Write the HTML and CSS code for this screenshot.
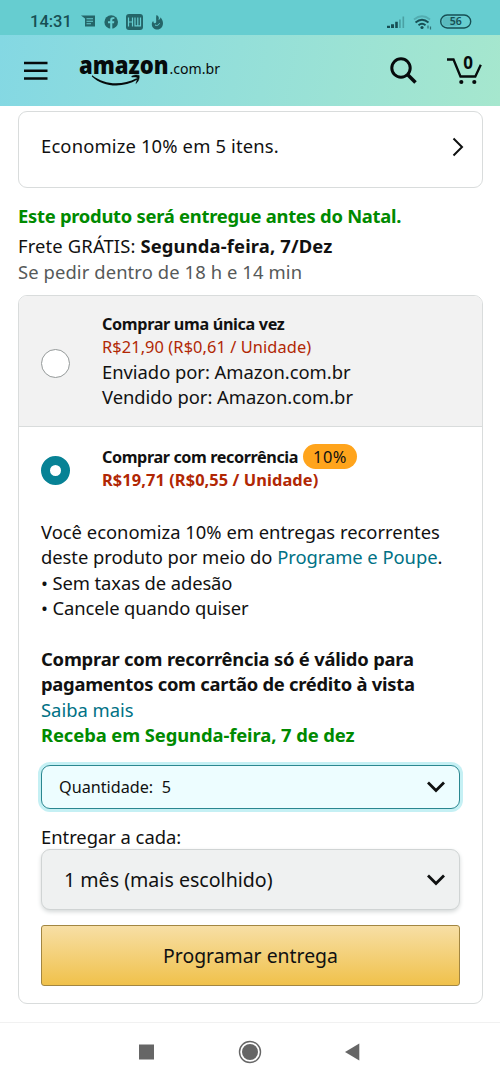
FILE: index.html
```html
<!DOCTYPE html>
<html lang="pt-BR">
<head>
<meta charset="utf-8">
<title>Amazon.com.br</title>
<link rel="stylesheet" href="styles.css">
</head>
<body>
<div class="status">
  <span class="clock">14:31</span>
  <svg class="status-left" width="84" height="18" viewBox="0 0 84 18">
    <path d="M0 2.500h14v11H4v-8z" fill="#246568"/>
    <path d="M5.500 5.700h6.500M5.500 8.200h6.500M5.500 10.700h4.500" stroke="#66cdd0" stroke-width="1.100"/>
    <circle cx="30.200" cy="9" r="6.800" fill="#246568"/>
    <path d="M29.200 16V10.300h-2.200V8.300h2.200V6.900q0-2.700 2.700-2.700h1.500v1.900h-1.100q-1 0-1 1v1.200h2l-.3 2h-1.700V16z" fill="#66cdd0"/>
    <rect x="45" y="1" width="17" height="16" rx="3" fill="#246568"/>
    <path d="M47.500 4.500v9M51.500 4.500v9M47.500 9h4M54 4.500v8.400h5.500v-8.400M56.800 4.500v8.400" stroke="#66cdd0" stroke-width="1.200" fill="none"/>
    <path d="M75.500 2c3 1.500 2.500 3.500 2 5 1.500-.5 2-2 1.900-2.800 1.800 1.800 2.600 4 2.600 6 0 3.800-2.600 6.300-5.600 6.300-3.200 0-5.600-2.200-5.600-5.300 0-1.500.7-2.700 1.500-3.300 0 1.500.8 2.300 1.600 2.300 2.600 0 .4-4 1.600-8.200z" fill="#246568"/>
    <path d="M74 12c1.800 1 4 .2 4.500-1.800" stroke="#66cdd0" fill="none"/>
  </svg>
  <svg class="status-right" width="88" height="20" viewBox="0 0 88 20">
    <g fill="#174f54"><path d="M1 16v-2.200h3V16zM5 16v-3.800h3V16zM9.200 16V9.800h2.600V16z"/><path d="M13 16V7.500h1.800V16zM16.500 16V4.500h1.600V16z" opacity=".35"/></g>
    <g fill="none" stroke="#174f54" stroke-width="1.800"><path d="M28 7.500q8-6.500 16 0" opacity=".25"/><path d="M29.500 10.500q6.500-5.500 13 0M32.500 13.300q3.500-3 7 0"/></g>
    <circle cx="36" cy="15.500" r="1.600" fill="#174f54"/><path d="M42 13.500v3M44.500 14.500v3" stroke="#174f54" stroke-width="1.200" opacity=".7"/>
    <rect x="54.700" y="3" width="30" height="13" rx="6.500" fill="none" stroke="#174f54" stroke-width="1.400"/>
    <rect x="56.500" y="4.800" width="16" height="9.400" rx="4" fill="#174f54" opacity=".15"/>
    <text x="69.700" y="13.300" text-anchor="middle" class="battery">56</text>
  </svg>
</div>
<header class="header">
  <svg class="menu" width="24" height="20" viewBox="0 0 24 20"><path d="M0 2h23.500M0 9.800h23.500M0 17.500h23.500" stroke="#060b0c" stroke-width="2.600"/></svg>
  <svg class="logo" width="144" height="34" viewBox="0 0 144 34">
    <text x="0" y="20.500" textLength="89.500" lengthAdjust="spacingAndGlyphs" class="logo-name">amazon</text>
    <text x="90.500" y="20.500" textLength="50.500" lengthAdjust="spacingAndGlyphs" class="logo-domain">.com.br</text>
    <path d="M13.200 22.300C26 32.300 43 32.600 57.600 25.300l.8 1.300C43 36 24 33.800 12.800 23.500z" fill="#060b0c"/>
    <path d="M52.800 23.200c2.800-1.700 6.200-1.500 7.400-.7.500 2.800-.9 6.300-3.300 8 1-2.700 1.700-4.700 1.200-6-1.200-.8-3.200-.5-5.300-.4z" fill="#060b0c" stroke="#060b0c" stroke-width=".5"/>
  </svg>
  <svg class="search" width="30" height="30" viewBox="0 0 30 30"><circle cx="12" cy="12" r="9.200" fill="none" stroke="#060b0c" stroke-width="3"/><path d="M18.500 18.500l8 8" stroke="#060b0c" stroke-width="3.600"/></svg>
  <svg class="cart" width="38" height="32" viewBox="0 0 38 32">
    <path d="M1 5.500h6.500l7 17h14.800l5.500-11.800" fill="none" stroke="#060b0c" stroke-width="2.300"/>
    <circle cx="15.300" cy="28" r="2.100" fill="#060b0c"/><circle cx="28.300" cy="28" r="2.100" fill="#060b0c"/>
    <text x="22" y="15" text-anchor="middle" class="cart-count">0</text>
  </svg>
</header>
<main>
  <section class="promo">
    <span class="promo-text">Economize 10% em 5 itens.</span>
    <svg width="12" height="20" viewBox="0 0 12 20"><path d="M1.500 1.500l8.500 8.500-8.500 8.500" fill="none" stroke="#0f1111" stroke-width="2"/></svg>
  </section>
  <section class="delivery">
    <p class="natal">Este produto será entregue antes do Natal.</p>
    <p class="shipping">Frete GRÁTIS: <b>Segunda-feira, 7/Dez</b></p>
    <p class="deadline">Se pedir dentro de 18 h e 14 min</p>
  </section>
  <section class="offers">
    <div class="once">
      <span class="radio"></span>
      <div>
        <p class="title">Comprar uma única vez</p>
        <p class="price">R$21,90 (R$0,61 / Unidade)</p>
        <p class="seller">Enviado por: Amazon.com.br</p>
        <p class="seller">Vendido por: Amazon.com.br</p>
      </div>
    </div>
    <div class="subscribe">
      <div class="choice">
        <span class="radio radio-on"></span>
        <div>
          <p class="title title-sub">Comprar com recorrência<span class="badge">10%</span></p>
          <p class="price price-sub">R$19,71 (R$0,55 / Unidade)</p>
        </div>
      </div>
      <div class="details">
        <p>Você economiza 10% em entregas recorrentes</p>
        <p class="program">deste produto por meio do <a>Programe e Poupe</a>.</p>
        <p class="bullet">• Sem taxas de adesão</p>
        <p class="bullet">• Cancele quando quiser</p>
        <p class="notice">Comprar com recorrência só é válido para</p>
        <p class="notice notice-end">pagamentos com cartão de crédito à vista</p>
        <p><a>Saiba mais</a></p>
        <p class="receive">Receba em Segunda-feira, 7 de dez</p>
      </div>
      <div class="select quantity">
        <span>Quantidade:&nbsp; 5</span>
        <svg width="20" height="14" viewBox="0 0 20 14"><path d="M2 2.500l8 8 8-8" fill="none" stroke="#0f1111" stroke-width="2.800"/></svg>
      </div>
      <p class="label">Entregar a cada:</p>
      <div class="select frequency">
        <span>1 mês (mais escolhido)</span>
        <svg width="20" height="14" viewBox="0 0 20 14"><path d="M2 2.500l8 8 8-8" fill="none" stroke="#0f1111" stroke-width="2.800"/></svg>
      </div>
      <div class="submit">Programar entrega</div>
    </div>
  </section>
</main>
<nav class="nav">
  <svg width="224" height="26" viewBox="0 0 224 26">
    <rect x="1" y="5.500" width="15" height="15" fill="#666"/>
    <circle cx="112" cy="13" r="10.500" fill="none" stroke="#666" stroke-width="1.400"/><circle cx="112" cy="13" r="8" fill="#666"/>
    <path d="M221.300 4.500v17L207 13z" fill="#666"/>
  </svg>
</nav>
</body>
</html>
```
FILE: styles.css
```css
* { box-sizing: border-box; }
body {
  margin: 0;
  width: 500px;
  height: 1082px;
  overflow: hidden;
  background: #fff;
  color: #111;
  font: 18.4px/25.4px "Noto Sans", sans-serif;
}
p { margin: 0; white-space: nowrap; }
svg { display: block; flex: none; overflow: visible; }
a { color: #007185; }

.status {
  display: flex;
  align-items: center;
  height: 35px;
  padding: 8px 26px 0 30px;
  background: #66cdd0;
}
.clock { width: 50px; font: 500 16.5px/18px Roboto, sans-serif; color: #174f54; }
.status-left { margin-left: 1px; }
.status-right { margin-left: auto; }
.battery { font: 600 10.5px "Noto Sans", sans-serif; fill: #174f54; }

.header {
  display: flex;
  align-items: flex-start;
  height: 71px;
  padding-top: 18px;
  background: linear-gradient(100deg, #84d8e3, #a6e7ce);
}
.menu { margin: 8px 0 0 24px; }
.logo { margin-left: 31px; }
.logo-name { font: 800 25.5px "Open Sans", sans-serif; fill: #060b0c; }
.logo-domain { font: 15px "Noto Sans", sans-serif; fill: #060b0c; }
.search { margin: 3px 0 0 auto; }
.cart { margin: 1px 16px 0 27px; }
.cart-count { font: 700 17px "Noto Sans", sans-serif; fill: #060b0c; }

main { padding: 5px 17px 0 18px; }
.promo {
  display: flex;
  align-items: flex-start;
  justify-content: space-between;
  height: 77px;
  padding: 20.5px 18px 0 22px;
  border: 1px solid #d9dcdc;
  border-radius: 9px;
}
.promo-text { letter-spacing: .15px; }
.promo svg { margin-top: 4.5px; }

.delivery { padding-top: 14.5px; height: 107px; }
.natal { height: 30.7px; color: #008a00; font-weight: 700; letter-spacing: -.27px; }
.shipping { letter-spacing: .14px; }
.deadline { color: #565959; letter-spacing: .1px; }

.offers {
  height: 709px;
  border: 1px solid #d9dcdc;
  border-radius: 9px;
  overflow: hidden;
}
.once {
  display: flex;
  height: 131px;
  padding: 16px 0 0 22px;
  background: #f2f2f2;
  border-bottom: 1px solid #d9dcdc;
}
.radio {
  width: 29px;
  height: 29px;
  margin: 37px 32px 0 0;
  border: 1.5px solid #949999;
  border-radius: 50%;
  background: #fff;
}
.radio-on { margin-top: 11px; border: 9px solid #078295; }
.title, .price { height: 23.4px; line-height: 24.4px; }
.title { font-size: 16.2px; font-weight: 700; letter-spacing: -.34px; }
.title-sub { display: flex; letter-spacing: -.4px; }
.price { font-size: 16.4px; color: #b12704; letter-spacing: .08px; }
.price-sub { font-weight: 700; }
.seller { letter-spacing: -.03px; }
.badge {
  height: 25px;
  margin: -1px 0 0 5px;
  padding: 0 10px;
  border-radius: 13px;
  background: #ffa41c;
  color: #111;
  font-size: 16.4px;
  font-weight: 400;
  line-height: 25px;
  letter-spacing: .4px;
}

.subscribe { padding: 18px 22px 0; }
.choice { display: flex; height: 74px; }
.details { height: 245.5px; }
.program { letter-spacing: -.05px; }
.bullet { letter-spacing: -.1px; }
.notice, .receive { font-weight: 700; letter-spacing: -.21px; }
.bullet + .notice { margin-top: 25.4px; }
.notice-end { letter-spacing: -.27px; }
.receive { color: #008a00; letter-spacing: -.09px; }
.select {
  display: flex;
  align-items: center;
  justify-content: space-between;
  padding: 0 13px 0 17px;
  border: 1px solid #d0d4d4;
  border-radius: 9px;
}
.quantity {
  height: 44.5px;
  border-color: #2b8790;
  background: #edfdff;
  box-shadow: 0 0 0 3px #c5f0f4;
  font-size: 16.2px;
}
.quantity span { padding-top: 1px; }
.label { margin-top: 14.6px; letter-spacing: -.03px; }
.frequency {
  height: 61px;
  padding-left: 22px;
  background: #eff1f1;
  box-shadow: 0 2px 4px #d5d9d9;
  font-size: 19.6px;
}
.frequency svg { margin-top: 1px; }
.submit {
  height: 61px;
  margin-top: 15px;
  border: 1px solid #a28641;
  border-radius: 3px;
  background: linear-gradient(#f7dfa5, #f0c14b);
  font-size: 19.4px;
  line-height: 60px;
  text-align: center;
}
.nav {
  display: flex;
  justify-content: center;
  height: 60px;
  margin-top: 17.5px;
  padding: 16px 0 0;
  border-top: 1px solid #f1f1f1;
}
```
